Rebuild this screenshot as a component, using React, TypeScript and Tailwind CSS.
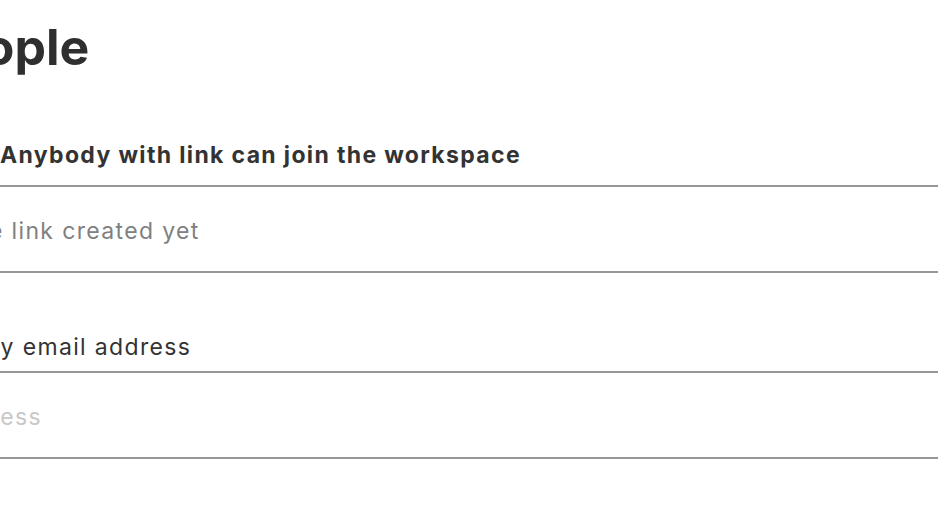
import React from "react";

export default function App() {
  return (
    <div className="w-[938px] h-[528px] overflow-hidden bg-white font-['Inter',sans-serif]">
      <div className="-ml-[130px] w-[1200px] flex flex-col">
        <h1 className="pt-[19px] pl-[52px] text-[50px] leading-[56px] font-bold text-[#2f2f2f]">
          People
        </h1>

        <div className="mt-[66px] pl-[130px] pb-[16px] border-b-2 border-[#979797]">
          <span className="text-[23px] leading-[28px] font-bold text-[#333333] tracking-[1.35px]">
            Anybody with link can join the workspace
          </span>
        </div>

        <div className="h-[86px] pt-[30px] pl-[26px] border-b-2 border-[#979797]">
          <span className="text-[23px] leading-[28px] text-[#808080] tracking-[1.35px]">
            No invite link created yet
          </span>
        </div>

        <label className="mt-[60px] pl-[41px] pb-[10px] border-b-2 border-[#979797] text-[23px] leading-[28px] text-[#333333] tracking-[1.35px]">
          Invite by email address
        </label>

        <input
          type="email"
          placeholder="Email address"
          className="h-[86px] pt-[4px] pl-[3px] border-b-2 border-[#979797] outline-none bg-transparent text-[23px] leading-[28px] text-[#333333] tracking-[1.35px] placeholder:text-[#c8c8c8]"
        />
      </div>
    </div>
  );
}
